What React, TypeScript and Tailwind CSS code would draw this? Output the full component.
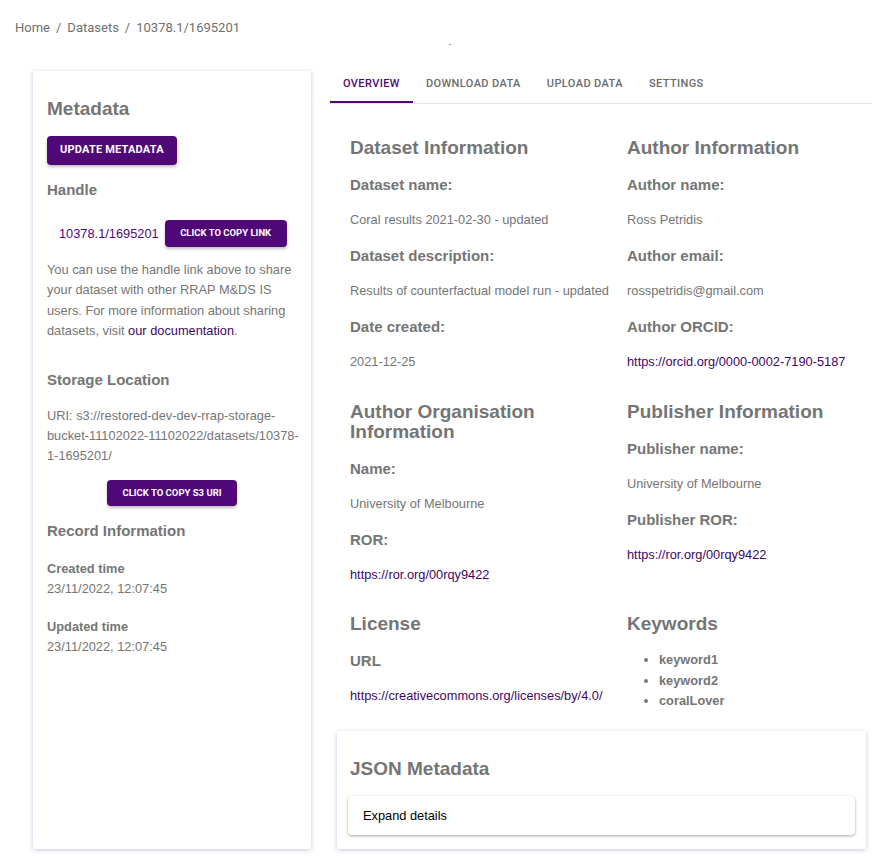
import React from "react";

const gray = "text-[#757575]";

function Heading({ children, className = "" }: { children: React.ReactNode; className?: string }) {
  return <div className={`text-[19px] leading-[20px] font-bold ${gray} ${className}`}>{children}</div>;
}
function Label({ children }: { children: React.ReactNode }) {
  return <div className={`mt-[18px] text-[15px] leading-[18px] font-bold ${gray}`}>{children}</div>;
}
function Value({ children, link = false }: { children: React.ReactNode; link?: boolean }) {
  return (
    <div className={`mt-[17px] text-[12.8px] leading-[18px] ${link ? "text-[#3f0764]" : gray}`}>{children}</div>
  );
}

export default function App() {
  const btn =
    "bg-[#500778] text-white font-bold uppercase rounded-[4px] shadow-[0_2px_3px_rgba(0,0,0,0.25)] flex items-center justify-center";
  return (
    <div className="w-[889px] min-h-[859px] bg-white" style={{ fontFamily: "'Liberation Sans', Arial, sans-serif" }}>
      <div
        className="pl-[15px] pt-[19px] h-[37px] text-[13px] leading-[18px] text-[#6f6f6f] flex"
        style={{ fontFamily: "Roboto, sans-serif" }}
      >
        <span>Home</span>
        <span className="mx-[6px]">/</span>
        <span>Datasets</span>
        <span className="mx-[6px]">/</span>
        <span>10378.1/1695201</span>
      </div>
      <div className="h-[29px] pl-[449px] pt-[7px]">
        <div className="w-[2px] h-[1px] bg-[#9a9a9a]" />
      </div>

      <div className="flex items-stretch pb-[10px]">
        {/* Left card */}
        <div className="ml-[33px] mt-[5px] w-[278px] bg-white shadow-[0_1px_4px_rgba(90,90,170,0.35)] pl-[14px] pr-[2px] pt-[28px]">
          <Heading>Metadata</Heading>
          <button
            className={`${btn} mt-[17px] h-[29px] px-[13px] text-[11px] tracking-[0.2px]`}
            style={{ fontFamily: "Roboto, sans-serif" }}
          >
            Update Metadata
          </button>
          <div className={`mt-[16px] text-[15px] leading-[18px] font-bold ${gray}`}>Handle</div>
          <div className="mt-[21px] pl-[12px] flex items-center gap-[6px]">
            <span className="text-[12.8px] text-[#500778]">10378.1/1695201</span>
            <button
              className={`${btn} h-[27px] w-[122px] text-[9.5px]`}
              style={{ fontFamily: "Roboto, sans-serif" }}
            >
              Click to copy link
            </button>
          </div>
          <p className={`mt-[13px] text-[12.8px] leading-[20.3px] ${gray}`}>
            You can use the handle link above to share your dataset with other RRAP M&amp;DS IS users. For more
            information about sharing datasets, visit <span className="text-[#3f0764]">our documentation</span>.
          </p>
          <div className={`mt-[30px] text-[15px] leading-[18px] font-bold ${gray}`}>Storage Location</div>
          <p className={`mt-[17px] text-[12.8px] leading-[20px] ${gray} break-words`}>
            URI: s3://restored-dev-dev-rrap-storage-bucket-11102022-11102022/datasets/10378-1-1695201/
          </p>
          <div className="flex justify-center mt-[14px] pr-[12px]">
            <button
              className={`${btn} h-[26px] w-[130px] text-[9.5px]`}
              style={{ fontFamily: "Roboto, sans-serif" }}
            >
              Click to copy S3 URI
            </button>
          </div>
          <div className={`mt-[16px] text-[15px] leading-[18px] font-bold ${gray}`}>Record Information</div>
          <div className={`mt-[19px] text-[12.8px] leading-[20px] ${gray}`}>
            <div className="font-bold">Created time</div>
            <div>23/11/2022, 12:07:45</div>
            <div className="font-bold mt-[18px]">Updated time</div>
            <div>23/11/2022, 12:07:45</div>
          </div>
        </div>

        {/* Right column */}
        <div className="ml-[19px] w-[542px]">
          <div
            className="flex border-b border-[#e4e4e4] text-[11px] font-medium tracking-[0.4px] uppercase"
            style={{ fontFamily: "Roboto, sans-serif" }}
          >
            <div className="relative h-[37px] px-[13px] flex items-center text-[#500778]">
              Overview
              <div className="absolute left-0 right-0 bottom-0 h-[2px] bg-[#500778]" />
            </div>
            <div className="h-[37px] px-[13px] flex items-center text-[#6b6b6b]">Download Data</div>
            <div className="h-[37px] px-[13px] flex items-center text-[#6b6b6b]">Upload Data</div>
            <div className="h-[37px] px-[13px] flex items-center text-[#6b6b6b]">Settings</div>
          </div>

          <div className="pl-[20px] pt-[34px] grid grid-cols-[277px_245px] gap-y-[31px]">
            <div>
              <Heading>Dataset Information</Heading>
              <Label>Dataset name:</Label>
              <Value>Coral results 2021-02-30 - updated</Value>
              <Label>Dataset description:</Label>
              <Value>Results of counterfactual model run - updated</Value>
              <Label>Date created:</Label>
              <Value>2021-12-25</Value>
            </div>
            <div>
              <Heading>Author Information</Heading>
              <Label>Author name:</Label>
              <Value>Ross Petridis</Value>
              <Label>Author email:</Label>
              <Value>rosspetridis@gmail.com</Value>
              <Label>Author ORCID:</Label>
              <Value link>https://orcid.org/0000-0002-7190-5187</Value>
            </div>
            <div>
              <Heading>
                Author Organisation
                <br />
                Information
              </Heading>
              <Label>Name:</Label>
              <Value>University of Melbourne</Value>
              <Label>ROR:</Label>
              <Value link>https://ror.org/00rqy9422</Value>
            </div>
            <div>
              <Heading>Publisher Information</Heading>
              <Label>Publisher name:</Label>
              <Value>University of Melbourne</Value>
              <Label>Publisher ROR:</Label>
              <Value link>https://ror.org/00rqy9422</Value>
            </div>
            <div className="-mt-[1px]">
              <Heading>License</Heading>
              <Label>URL</Label>
              <Value link>https://creativecommons.org/licenses/by/4.0/</Value>
            </div>
            <div className="-mt-[1px]">
              <Heading>Keywords</Heading>
              <ul className={`mt-[16px] list-disc pl-[32px] text-[12.8px] leading-[20.5px] font-bold ${gray}`}>
                <li>keyword1</li>
                <li>keyword2</li>
                <li>coralLover</li>
              </ul>
            </div>
          </div>

          <div className="ml-[7px] mt-[19px] w-[529px] bg-white shadow-[0_1px_4px_rgba(90,90,170,0.35)] px-[11px] pt-[28px] pb-[14px]">
            <Heading className="pl-[2px]">JSON Metadata</Heading>
            <div className="mt-[17px] h-[39px] rounded-[4px] bg-white shadow-[0_1px_3px_rgba(0,0,0,0.35)] pl-[15px] pt-[1px] flex items-center text-[12.8px] text-black">
              Expand details
            </div>
          </div>
        </div>
      </div>
    </div>
  );
}
